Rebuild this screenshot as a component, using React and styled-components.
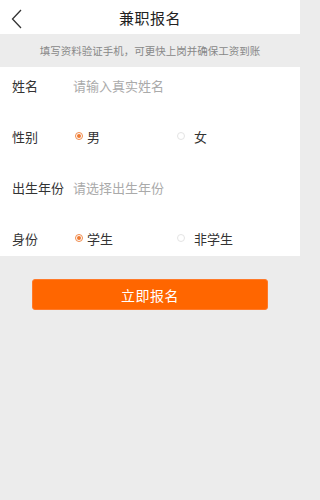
import React, { useState } from "react";
import styled, { createGlobalStyle } from "styled-components";

const GlobalStyle = createGlobalStyle`
  html, body {
    margin: 0;
    padding: 0;
    background: #ececec;
    font-family: "Noto Sans CJK SC", "Noto Sans", sans-serif;
  }
`;

export default function App() {
  const [gender, setGender] = useState("male");
  const [identity, setIdentity] = useState("student");

  return (
    <Page>
      <GlobalStyle />
      <Header>
        <BackButton aria-label="back">
          <svg width="11" height="20" viewBox="0 0 11 20" fill="none">
            <path d="M10 1L1.5 10L10 19" stroke="#333" strokeWidth="1.3" />
          </svg>
        </BackButton>
        <Title>兼职报名</Title>
      </Header>
      <Notice>填写资料验证手机，可更快上岗并确保工资到账</Notice>
      <Form>
        <Row>
          <Label>姓名</Label>
          <Input placeholder="请输入真实姓名" />
        </Row>
        <Row>
          <Label>性别</Label>
          <Option onClick={() => setGender("male")}>
            <Radio $checked={gender === "male"} />
            男
          </Option>
          <Option $gap={9} onClick={() => setGender("female")}>
            <Radio $checked={gender === "female"} />
            女
          </Option>
        </Row>
        <Row>
          <Label>出生年份</Label>
          <Placeholder>请选择出生年份</Placeholder>
        </Row>
        <Row>
          <Label>身份</Label>
          <Option onClick={() => setIdentity("student")}>
            <Radio $checked={identity === "student"} />
            学生
          </Option>
          <Option $gap={9} onClick={() => setIdentity("other")}>
            <Radio $checked={identity === "other"} />
            非学生
          </Option>
        </Row>
      </Form>
      <Actions>
        <SubmitButton>立即报名</SubmitButton>
      </Actions>
    </Page>
  );
}

const Page = styled.div`
  width: 300px;
  min-height: 500px;
  background: #ececec;
`;

const Header = styled.header`
  position: relative;
  height: 34px;
  background: #fff;
  display: flex;
  align-items: center;
  justify-content: center;
`;

const BackButton = styled.div`
  position: absolute;
  left: 11px;
  top: 9px;
  display: flex;
`;

const Title = styled.h1`
  margin: 0;
  font-size: 15px;
  font-weight: 400;
  color: #222;
  letter-spacing: 0.5px;
`;

const Notice = styled.div`
  height: 33px;
  line-height: 33px;
  text-align: center;
  font-size: 10.5px;
  color: #888;
  background: #ececec;
`;

const Form = styled.div`
  background: #fff;
  padding: 0 12px;
  display: flex;
  flex-direction: column;
  gap: 15px;
`;

const Row = styled.div`
  height: 36px;
  display: flex;
  align-items: center;
`;

const Label = styled.div`
  width: 61px;
  font-size: 13px;
  color: #333;
`;

const Input = styled.input`
  flex: 1;
  min-width: 0;
  border: 0;
  outline: none;
  padding: 0;
  font-family: inherit;
  font-size: 13px;
  color: #333;
  background: transparent;
  &::placeholder {
    color: #aaa;
  }
`;

const Placeholder = styled.div`
  font-size: 13px;
  color: #aaa;
`;

const Option = styled.div`
  width: 102px;
  display: flex;
  align-items: center;
  gap: ${(p) => p.$gap || 4}px;
  font-size: 13px;
  color: #333;
  cursor: pointer;
`;

const Radio = styled.span`
  box-sizing: border-box;
  width: 8px;
  height: 8px;
  margin-left: 2px;
  border-radius: 50%;
  border: 1px solid ${(p) => (p.$checked ? "#f08a4b" : "#e4e4e4")};
  display: flex;
  align-items: center;
  justify-content: center;
  &::after {
    content: "";
    width: 4px;
    height: 4px;
    border-radius: 50%;
    background: ${(p) => (p.$checked ? "#f07a30" : "transparent")};
  }
`;

const Actions = styled.div`
  padding: 23px 32px 0;
`;

const SubmitButton = styled.button`
  width: 100%;
  height: 31px;
  border: 1px solid #ff7a2a;
  border-radius: 3px;
  background: #ff6600;
  color: #fff;
  font-family: inherit;
  font-size: 14px;
  letter-spacing: 0.5px;
  cursor: pointer;
`;
